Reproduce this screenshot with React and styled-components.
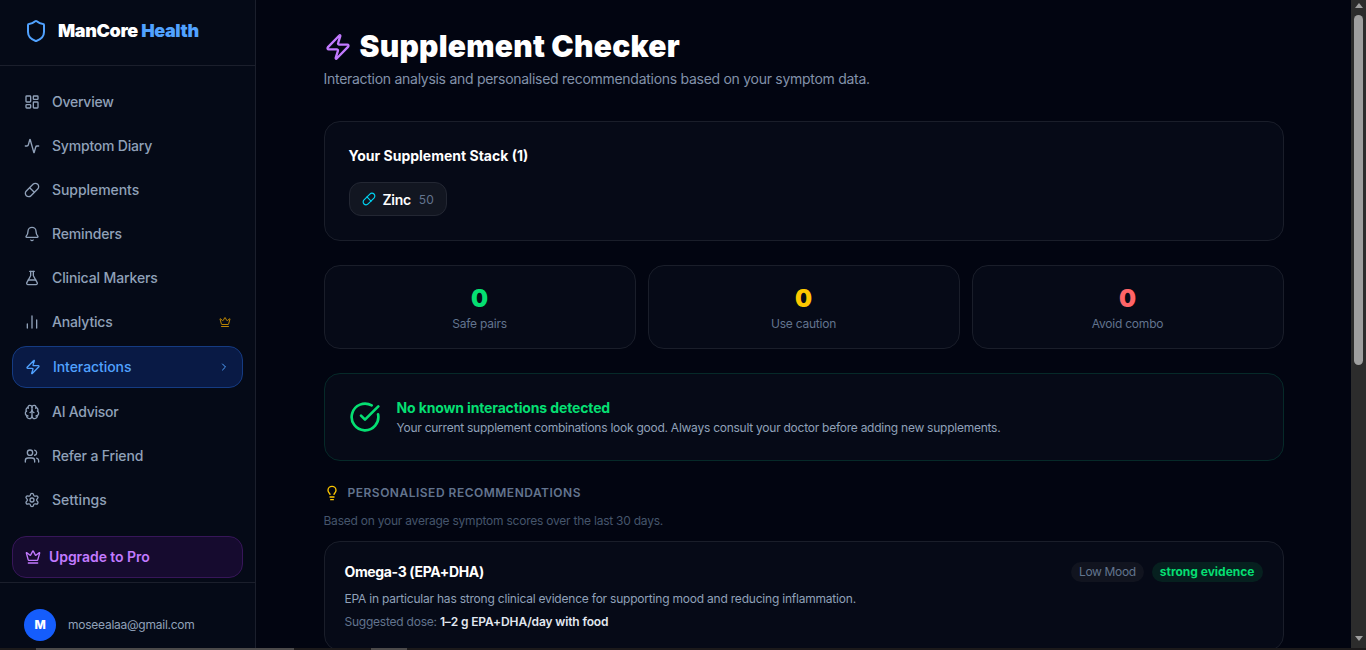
import React from "react";
import styled, { createGlobalStyle } from "styled-components";
import {
	Activity,
	Bell,
	Brain,
	ChartNoAxesColumn,
	ChevronRight,
	CircleCheckBig,
	Crown,
	FlaskConical,
	LayoutDashboard,
	Lightbulb,
	Pill,
	Settings,
	Shield,
	Users,
	Zap,
} from "lucide-react";

const GlobalStyle = createGlobalStyle`
	* {
		box-sizing: border-box;
	}
	body {
		margin: 0;
		background: #020511;
		color: #fff;
		font-family: Inter, "Liberation Sans", sans-serif;
		overflow: hidden;
	}
	h1, h2, h3, p {
		margin: 0;
	}
	svg {
		display: block;
		flex-shrink: 0;
	}
`;

const Screen = styled.div`
	height: 650px;
	display: flex;
	flex-direction: column;
`;

const Layout = styled.div`
	flex: 1;
	min-height: 0;
	display: flex;
	overflow: hidden;
`;

const Sidebar = styled.aside`
	width: 256px;
	flex-shrink: 0;
	display: flex;
	flex-direction: column;
	background: #050a17;
	border-right: 1px solid #1b1f2c;
`;

const Brand = styled.div`
	height: 66px;
	flex-shrink: 0;
	display: flex;
	align-items: center;
	gap: 10px;
	padding: 0 24px 3px;
	border-bottom: 1px solid #1b1f2c;
	font-size: 18px;
	font-weight: 900;
	letter-spacing: -0.37px;
	color: #51a2ff;
	white-space: nowrap;

	span {
		padding-bottom: 2px;
	}
	b {
		font-weight: 900;
		color: #fff;
	}
`;

const Nav = styled.nav`
	display: flex;
	flex-direction: column;
	gap: 4px;
	padding: 16px 12px;
`;

const NavItem = styled.a`
	height: ${(props) => (props.$active ? "42px" : "40px")};
	display: flex;
	align-items: center;
	gap: 12px;
	padding: 0 12px;
	border: ${(props) => (props.$active ? "1px solid #153b82" : "none")};
	border-radius: 14px;
	background: ${(props) => (props.$active ? "#091a45" : "transparent")};
	color: ${(props) => (props.$active ? "#51a2ff" : "#90a1b9")};
	font-size: 14px;
	font-weight: 500;
	letter-spacing: ${(props) => props.$track || "-0.16px"};

	span {
		flex: 1;
		padding-bottom: 1px;
	}
`;

const Upgrade = styled.button`
	height: 42px;
	flex-shrink: 0;
	display: flex;
	align-items: center;
	gap: 8px;
	margin: 0 12px 4px;
	padding: 0 12px;
	border: 1px solid #371659;
	border-radius: 14px;
	background: #160b2f;
	color: #c27aff;
	font-family: inherit;
	font-size: 14px;
	font-weight: 600;
	letter-spacing: -0.06px;

	span {
		padding-bottom: 1px;
	}
`;

const Account = styled.div`
	flex: 1;
	display: flex;
	align-items: flex-start;
	gap: 12px;
	padding: 26px 24px 0;
	border-top: 1px solid #1b1f2c;
	color: #90a1b9;
	font-size: 12px;
	line-height: 32px;
	letter-spacing: -0.25px;
`;

const Avatar = styled.div`
	width: 32px;
	height: 32px;
	border-radius: 50%;
	background: #155dfc;
	color: #fff;
	font-weight: 800;
	text-align: center;
`;

const Main = styled.main`
	flex: 1;
	display: flex;
	flex-direction: column;
	align-items: center;
	padding-top: 28px;
`;

const Content = styled.div`
	width: 960px;
	display: flex;
	flex-direction: column;
	gap: 24px;
`;

const PageHead = styled.header`
	height: 69px;
	flex-shrink: 0;
`;

const PageTitle = styled.h1`
	display: flex;
	align-items: center;
	gap: 8px;
	padding-top: 1px;
	font-size: 30px;
	font-weight: 900;
	line-height: 36px;
	letter-spacing: 0.24px;

	span {
		padding-bottom: 2px;
		line-height: 34px;
	}
`;

const Subtitle = styled.p`
	margin-top: 4px;
	color: #8292aa;
	font-size: 14px;
	line-height: 20px;
	letter-spacing: -0.28px;
`;

const Card = styled.section`
	flex-shrink: 0;
	padding: ${(props) => props.$pad || "24px"};
	border: 1px solid ${(props) => props.$border || "#1a1e2a"};
	border-radius: 16px;
	background: #060a17;
`;

const CardTitle = styled.h2`
	color: ${(props) => props.color || "#fff"};
	font-size: 14px;
	font-weight: 700;
	line-height: 20px;
	letter-spacing: ${(props) => props.$track || "0"};
`;

const Chip = styled.div`
	width: 98px;
	height: 34px;
	display: flex;
	align-items: center;
	gap: 7px;
	margin-top: 16px;
	padding: 0 12px;
	border: 1px solid #232733;
	border-radius: 12px;
	background: #121621;
	font-size: 14px;
	font-weight: 600;
	letter-spacing: -0.3px;

	small {
		margin-left: 1px;
		color: #62748e;
		font-size: 12px;
		font-weight: 400;
		letter-spacing: 0.1px;
	}
`;

const Stats = styled.div`
	display: grid;
	grid-template-columns: repeat(3, 1fr);
	gap: 12px;
`;

const StatCard = styled(Card)`
	text-align: center;
`;

const StatValue = styled.div`
	color: ${(props) => props.color};
	font-size: 24px;
	font-weight: 900;
	line-height: 34px;
`;

const StatLabel = styled.div`
	color: #62748e;
	font-size: 12px;
	line-height: 16px;
	letter-spacing: -0.22px;
`;

const Notice = styled(Card)`
	display: flex;
	align-items: center;
	gap: 16px;
`;

const NoticeText = styled.p`
	margin-top: 2px;
	color: #90a1b9;
	font-size: 12px;
	line-height: 16px;
	letter-spacing: -0.25px;
`;

const SectionTitle = styled.h3`
	display: flex;
	align-items: center;
	gap: 8px;
	color: #62748e;
	font-size: 12px;
	font-weight: 600;
	line-height: 16px;
	letter-spacing: 0.5px;
`;

const Hint = styled.p`
	margin: 12px 0;
	color: #45556c;
	font-size: 12px;
	line-height: 16px;
	letter-spacing: -0.23px;
`;

const RecHead = styled.div`
	display: flex;
	align-items: center;
	justify-content: space-between;
`;

const Tags = styled.div`
	display: flex;
	gap: 8px;
`;

const Tag = styled.span`
	height: 20px;
	padding: 0 8px;
	border-radius: 10px;
	background: ${(props) => (props.$strong ? "#06201f" : "#11141f")};
	color: ${(props) => (props.$strong ? "#05df72" : "#62748e")};
	font-size: 12px;
	font-weight: ${(props) => (props.$strong ? 700 : 400)};
	line-height: 20px;
	letter-spacing: ${(props) => (props.$strong ? "0" : "-0.35px")};
`;

const RecText = styled.p`
	margin-top: 7px;
	color: #90a1b9;
	font-size: 12px;
	line-height: 19px;
	letter-spacing: -0.21px;
`;

const Dose = styled.p`
	margin-top: 6px;
	color: #62748e;
	font-size: 12px;
	line-height: 16px;
	letter-spacing: -0.23px;

	b {
		color: #e2e8f0;
		font-weight: 600;
		letter-spacing: -0.14px;
	}
`;

const Scrollbar = styled.div`
	width: 15px;
	flex-shrink: 0;
	display: flex;
	flex-direction: column;
	align-items: center;
	justify-content: space-between;
	padding: 3px 0 7px;
	background: #2c2c2c;
`;

const Thumb = styled.div`
	width: 9px;
	height: 350px;
	margin: 7px 0 auto;
	border-radius: 5px;
	background: #9f9f9f;
`;

const Arrow = styled.div`
	border: solid transparent;
	border-width: ${(props) => (props.$down ? "5px 4.5px 0" : "0 4.5px 5px")};
	border-top-color: ${(props) => (props.$down ? "#9f9f9f" : "transparent")};
	border-bottom-color: ${(props) => (props.$down ? "transparent" : "#9f9f9f")};
`;

const Taskbar = styled.div`
	height: 2px;
	flex-shrink: 0;
	display: flex;
	gap: 77px;
	padding-left: 36px;
	background: #1c1a1b;
`;

const TaskEdge = styled.div`
	width: ${(props) => props.width};
	background: ${(props) => props.color};
`;

const links = [
	{ label: "Overview", icon: LayoutDashboard, track: "-0.25px" },
	{ label: "Symptom Diary", icon: Activity, track: "-0.2px" },
	{ label: "Supplements", icon: Pill, track: "-0.06px" },
	{ label: "Reminders", icon: Bell },
	{ label: "Clinical Markers", icon: FlaskConical, track: "-0.13px" },
	{ label: "Analytics", icon: ChartNoAxesColumn, pro: true },
	{ label: "Interactions", icon: Zap, active: true, track: "-0.06px" },
	{ label: "AI Advisor", icon: Brain, track: "-0.26px" },
	{ label: "Refer a Friend", icon: Users },
	{ label: "Settings", icon: Settings, track: "0.04px" },
];

const stats = [
	{ label: "Safe pairs", color: "#05df72" },
	{ label: "Use caution", color: "#fdc700" },
	{ label: "Avoid combo", color: "#ff6467" },
];

const App = () => {
	return (
		<Screen>
			<GlobalStyle />
			<Layout>
				<Sidebar>
					<Brand>
						<Shield size={24} />
						<span>
							<b>ManCore</b> Health
						</span>
					</Brand>
					<Nav>
						{links.map(({ label, icon: Icon, active, pro, track }) => (
							<NavItem key={label} $active={active} $track={track}>
								<Icon size={16} />
								<span>{label}</span>
								{pro && <Crown size={12} color="#bb8504" />}
								{active && <ChevronRight size={12} />}
							</NavItem>
						))}
					</Nav>
					<Upgrade>
						<Crown size={16} />
						<span>Upgrade to Pro</span>
					</Upgrade>
					<Account>
						<Avatar>M</Avatar>
						moseealaa@gmail.com
					</Account>
				</Sidebar>
				<Main>
					<Content>
						<PageHead>
							<PageTitle>
								<Zap size={28} color="#c27aff" />
								<span>Supplement Checker</span>
							</PageTitle>
							<Subtitle>
								Interaction analysis and personalised recommendations based on your symptom data.
							</Subtitle>
						</PageHead>
						<Card>
							<CardTitle>Your Supplement Stack (1)</CardTitle>
							<Chip>
								<Pill size={14} color="#00d3f2" />
								Zinc
								<small>50</small>
							</Chip>
						</Card>
						<Stats>
							{stats.map(({ label, color }) => (
								<StatCard key={label} $pad="16px">
									<StatValue color={color}>0</StatValue>
									<StatLabel>{label}</StatLabel>
								</StatCard>
							))}
						</Stats>
						<Notice $border="#062a29">
							<CircleCheckBig size={32} color="#05df72" />
							<div>
								<CardTitle color="#05df72" $track="-0.14px">
									No known interactions detected
								</CardTitle>
								<NoticeText>
									Your current supplement combinations look good. Always consult your doctor before
									adding new supplements.
								</NoticeText>
							</div>
						</Notice>
						<div>
							<SectionTitle>
								<Lightbulb size={16} color="#fdc700" />
								PERSONALISED RECOMMENDATIONS
							</SectionTitle>
							<Hint>Based on your average symptom scores over the last 30 days.</Hint>
							<Card $pad="20px">
								<RecHead>
									<CardTitle $track="-0.36px">Omega-3 (EPA+DHA)</CardTitle>
									<Tags>
										<Tag>Low Mood</Tag>
										<Tag $strong>strong evidence</Tag>
									</Tags>
								</RecHead>
								<RecText>
									EPA in particular has strong clinical evidence for supporting mood and reducing
									inflammation.
								</RecText>
								<Dose>
									Suggested dose: <b>1–2 g EPA+DHA/day with food</b>
								</Dose>
							</Card>
						</div>
					</Content>
				</Main>
				<Scrollbar>
					<Arrow />
					<Thumb />
					<Arrow $down />
				</Scrollbar>
			</Layout>
			<Taskbar>
				<TaskEdge width="258px" color="#4c4a4a" />
				<TaskEdge width="36px" color="#4c4a4a" />
			</Taskbar>
		</Screen>
	);
};
export default App;
